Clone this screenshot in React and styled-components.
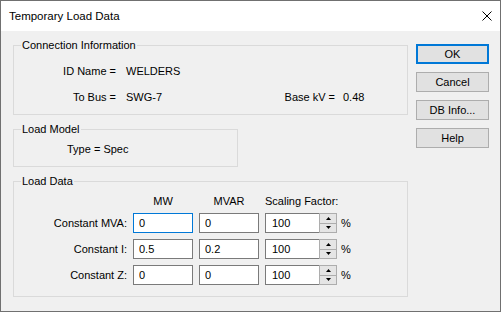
import React from "react";
import styled, { createGlobalStyle } from "styled-components";

const GlobalStyle = createGlobalStyle`
  html, body {
    margin: 0;
    padding: 0;
    background: #ffffff;
  }
  body {
    font-family: "Liberation Sans", Arial, sans-serif;
  }
`;

const Window = styled.div`
  width: 501px;
  height: 312px;
  box-sizing: border-box;
  border: 1px solid #707070;
  background: #f0f0f0;
  display: flex;
  flex-direction: column;
  font-size: 11px;
  color: #000;
`;

const TitleBar = styled.div`
  height: 30px;
  flex: none;
  background: #fff;
  display: flex;
  align-items: center;
  justify-content: space-between;
  padding: 0 8px;
`;

const Title = styled.span`
  font-size: 11.5px;
`;

const Body = styled.div`
  display: flex;
  gap: 8px;
  padding: 7px 11px 0 12px;
`;

const LeftCol = styled.div`
  display: flex;
  flex-direction: column;
  gap: 7px;
  width: 395px;
`;

const Group = styled.fieldset`
  margin: 0;
  padding: 0;
  min-width: 0;
  box-sizing: border-box;
  width: ${({ $w }) => $w}px;
  border: 1px solid #dadada;
`;

const Legend = styled.legend`
  margin-left: 7px;
  padding: 0 1px;
  line-height: 14px;
  font-size: 11px;
`;

const InfoRows = styled.div`
  display: flex;
  flex-direction: column;
  gap: 12px;
  padding: ${({ $pad }) => $pad};
`;

const Row = styled.div`
  display: flex;
  align-items: center;
  height: 14px;
  line-height: 14px;
  white-space: nowrap;
`;

const Label = styled.span`
  flex: none;
  width: ${({ $w }) => $w}px;
  text-align: right;
`;

const Value = styled.span`
  flex: none;
  margin-left: ${({ $gap }) => $gap}px;
  width: ${({ $w }) => ($w ? `${$w}px` : "auto")};
`;

const DataGrid = styled.div`
  display: grid;
  grid-template-columns: 119px 66px 66px 76px auto;
  grid-template-rows: 13px 20px 20px 20px;
  row-gap: 6px;
  padding: 6px 0 11px 0;
  align-items: center;
  white-space: nowrap;
`;

const ColHead = styled.span`
  align-self: start;
  line-height: 14px;
  width: ${({ $w }) => $w}px;
  text-align: ${({ $align }) => $align || "center"};
`;

const RowLabel = styled.span`
  text-align: right;
  padding-right: 6px;
`;

const Field = styled.input`
  width: ${({ $w }) => $w || 60}px;
  height: 20px;
  box-sizing: border-box;
  margin: 0;
  padding: 0 5px;
  border: 1px solid ${({ $focused }) => ($focused ? "#0078d7" : "#7a7a7a")};
  ${({ $spin }) => ($spin ? "border-right: none; padding-left: 6px;" : "")}
  outline: none;
  background: #fff;
  font-family: "Liberation Sans", Arial, sans-serif;
  font-size: 11px;
  color: #000;
`;

const SpinBox = styled.div`
  display: flex;
  width: 72px;
  height: 20px;
`;

const Spinner = styled.div`
  width: 18px;
  height: 20px;
  box-sizing: border-box;
  border: 1px solid #adadad;
  background: #f0f0f0;
  display: flex;
  flex-direction: column;
`;

const SpinBtn = styled.div`
  flex: 1;
  display: flex;
  align-items: center;
  justify-content: center;
  background: #e5e5e5;
  border-top: ${({ $down }) => ($down ? "1px solid #adadad" : "none")};
`;

const Percent = styled.span`
  line-height: 14px;
`;

const ButtonCol = styled.div`
  display: flex;
  flex-direction: column;
  gap: 8px;
  margin-top: 6px;
`;

const Button = styled.button`
  width: 73px;
  height: 20px;
  box-sizing: border-box;
  margin: 0;
  padding: 0;
  background: #e1e1e1;
  border: ${({ $primary }) => ($primary ? "2px solid #0078d7" : "1px solid #adadad")};
  font-family: "Liberation Sans", Arial, sans-serif;
  font-size: 11px;
  color: #000;
  line-height: 14px;
`;

const CloseIcon = () => (
  <svg width="10" height="10" viewBox="0 0 10 10">
    <path d="M0.5 0.5 L9.5 9.5 M9.5 0.5 L0.5 9.5" stroke="#000" strokeWidth="1" fill="none" />
  </svg>
);

const Arrow = ({ down }) => (
  <svg width="5" height="3" viewBox="0 0 5 3">
    <polygon points={down ? "0,0 5,0 2.5,3" : "0,3 5,3 2.5,0"} fill="#000" />
  </svg>
);

const rows = [
  { label: "Constant MVA:", mw: "0", mvar: "0", scale: "100", focused: true },
  { label: "Constant I:", mw: "0.5", mvar: "0.2", scale: "100" },
  { label: "Constant Z:", mw: "0", mvar: "0", scale: "100" },
];

export default function App() {
  return (
    <>
      <GlobalStyle />
      <Window>
        <TitleBar>
          <Title>Temporary Load Data</Title>
          <CloseIcon />
        </TitleBar>
        <Body>
          <LeftCol>
            <Group $w={395}>
              <Legend>Connection Information</Legend>
              <InfoRows $pad="12px 0 10px 0">
                <Row>
                  <Label $w={102}>ID Name =</Label>
                  <Value $gap={10}>WELDERS</Value>
                </Row>
                <Row>
                  <Label $w={102}>To Bus =</Label>
                  <Value $gap={10} $w={150}>SWG-7</Value>
                  <Label $w={59}>Base kV =</Label>
                  <Value $gap={8}>0.48</Value>
                </Row>
              </InfoRows>
            </Group>

            <Group $w={225}>
              <Legend>Load Model</Legend>
              <InfoRows $pad="6px 0 10px 53px">
                <Row>Type = Spec</Row>
              </InfoRows>
            </Group>

            <Group $w={395}>
              <Legend>Load Data</Legend>
              <DataGrid>
                <span />
                <ColHead $w={60}>MW</ColHead>
                <ColHead $w={60}>MVAR</ColHead>
                <ColHead $w={76} $align="left">Scaling Factor:</ColHead>
                <span />
                {rows.map((r) => (
                  <React.Fragment key={r.label}>
                    <RowLabel>{r.label}</RowLabel>
                    <Field defaultValue={r.mw} $focused={r.focused} />
                    <Field defaultValue={r.mvar} />
                    <SpinBox>
                      <Field defaultValue={r.scale} $w={54} $spin />
                      <Spinner>
                        <SpinBtn>
                          <Arrow />
                        </SpinBtn>
                        <SpinBtn $down>
                          <Arrow down />
                        </SpinBtn>
                      </Spinner>
                    </SpinBox>
                    <Percent>%</Percent>
                  </React.Fragment>
                ))}
              </DataGrid>
            </Group>
          </LeftCol>

          <ButtonCol>
            <Button $primary>OK</Button>
            <Button>Cancel</Button>
            <Button>DB Info...</Button>
            <Button>Help</Button>
          </ButtonCol>
        </Body>
      </Window>
    </>
  );
}
